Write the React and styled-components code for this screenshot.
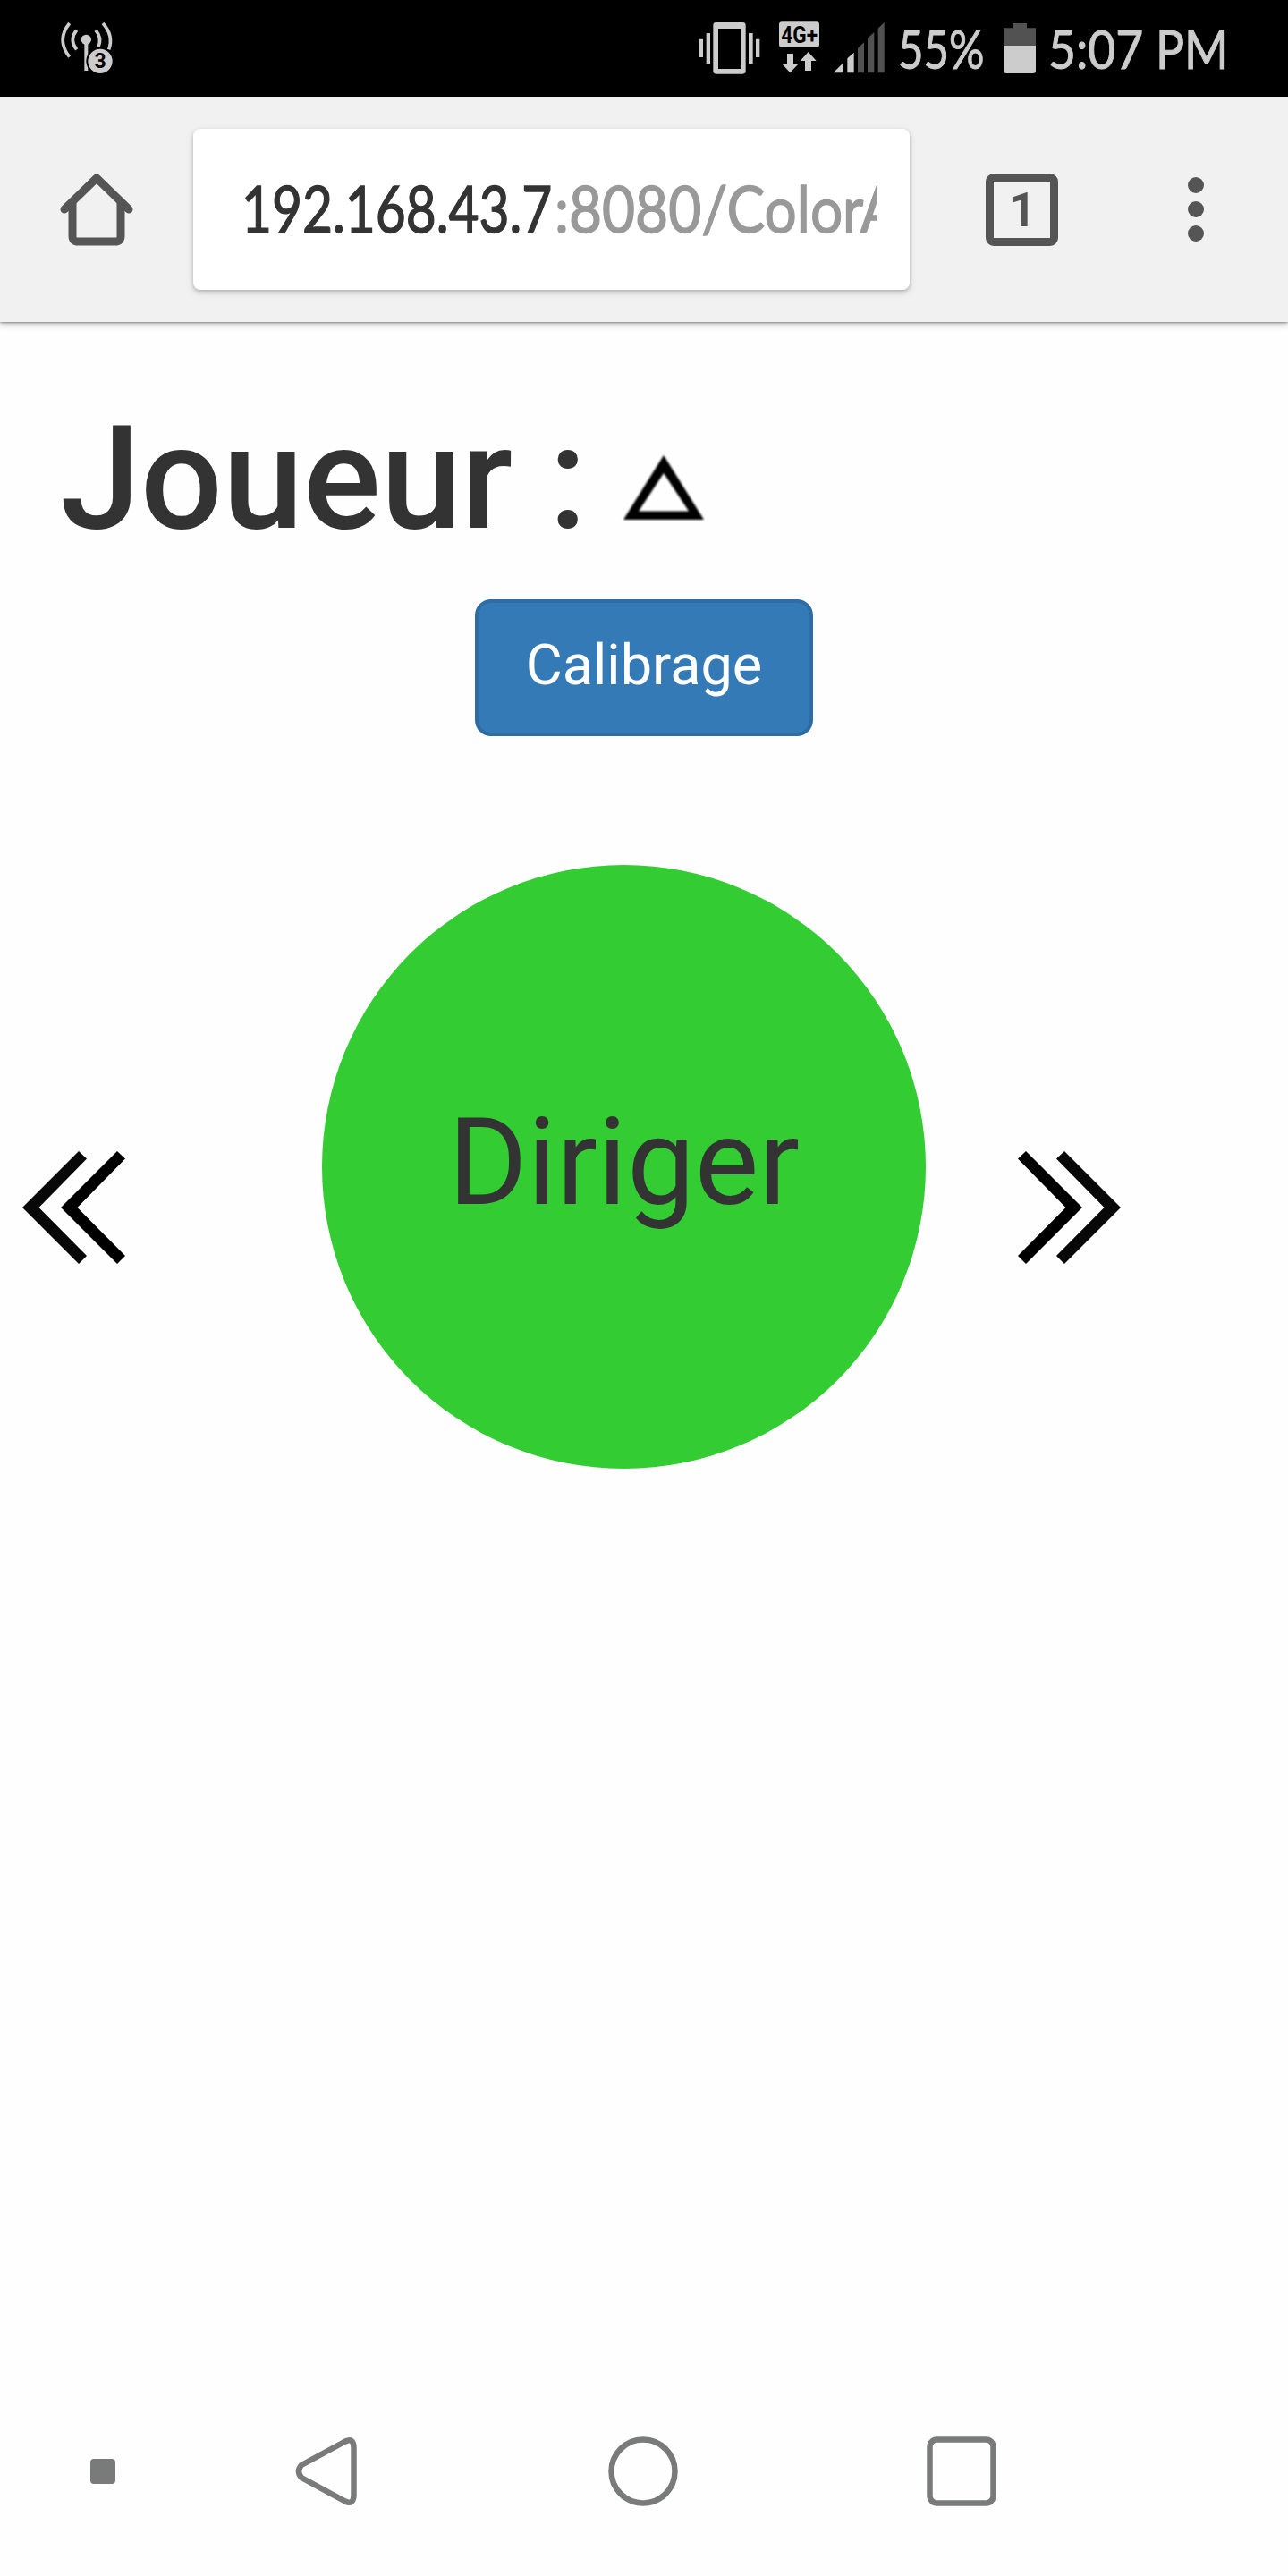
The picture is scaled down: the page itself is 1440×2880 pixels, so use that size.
import React from "react";
import styled, { createGlobalStyle } from "styled-components";

const GlobalStyle = createGlobalStyle`
  * { box-sizing: border-box; }
  body { margin: 0; background: #fefefe; }
  svg { display: block; flex: none; overflow: visible; }
`;

const Screen = styled.div`
  width: 1440px;
  height: 2880px;
  display: flex;
  flex-direction: column;
  overflow: hidden;
  background: #fefefe;
  color: #333;
  font-family: Roboto, "Liberation Sans", sans-serif;
`;

const StatusBar = styled.header`
  height: 108px;
  flex: none;
  display: flex;
  align-items: flex-start;
  padding: 23px 69px 0 66px;
  background: #000;
  color: #ccc;
`;

const StatusItems = styled.div`
  display: flex;
  align-items: flex-start;
  margin-left: auto;
`;

const StatusIcon = styled.svg`
  margin-left: ${(p) => p.$gap || 0}px;
  margin-top: ${(p) => p.$drop || 0}px;
`;

const StatusText = styled.span`
  width: ${(p) => p.$width}px;
  margin-left: ${(p) => p.$gap}px;
  height: 64px;
  line-height: 62px;
  font-family: Lato, sans-serif;
  font-size: 60px;
  white-space: nowrap;
  -webkit-text-stroke: 1px currentColor;
`;

const Narrow = styled.span`
  display: inline-block;
  transform: scaleX(${(p) => p.$scale});
  transform-origin: left center;
`;

const Toolbar = styled.nav`
  height: 252px;
  flex: none;
  display: flex;
  align-items: center;
  padding-left: 67px;
  background: #f1f1f1;
  box-shadow: 0 1px 2px rgba(0, 0, 0, 0.35), 0 3px 7px rgba(0, 0, 0, 0.22);
`;

const AddressBox = styled.div`
  width: 801px;
  height: 180px;
  margin: 0 85px 0 67px;
  padding: 0 36px 0 54px;
  display: flex;
  align-items: center;
  border-radius: 8px;
  background: #fff;
  box-shadow: 0 2px 4px rgba(0, 0, 0, 0.18), 0 3px 8px rgba(0, 0, 0, 0.13);
`;

const Address = styled.div`
  width: 711px;
  height: 90px;
  display: flex;
  overflow: hidden;
  line-height: 88px;
  font-family: Lato, sans-serif;
  font-size: 71px;
  white-space: nowrap;
  -webkit-text-stroke: 1.4px currentColor;
`;

const AddressPart = styled.span`
  width: ${(p) => p.$width}px;
  flex: none;
  color: ${(p) => p.$color};
`;

const TabCount = styled.div`
  width: 81px;
  height: 81px;
  display: flex;
  align-items: center;
  justify-content: center;
  padding-left: 1px;
  border: 9px solid #555;
  border-radius: 9px;
  color: #555;
  font-size: 54px;
  font-weight: 700;
  line-height: 63px;
`;

const MenuDots = styled.div`
  display: flex;
  flex-direction: column;
  gap: 9px;
  margin-left: 145px;
`;

const Dot = styled.i`
  width: 18px;
  height: 18px;
  border-radius: 50%;
  background: #555;
`;

const Content = styled.main`
  flex: 1;
  display: flex;
  flex-direction: column;
  align-items: center;
`;

const Title = styled.h1`
  align-self: stretch;
  height: 182px;
  margin: 86px 0 0;
  padding-left: 67px;
  display: flex;
  font-size: 162px;
  line-height: 178px;
  font-weight: 500;
`;

const TitleText = styled.span`
  width: 629px;
  white-space: nowrap;
`;

const Shape = styled.svg`
  margin-top: 61px;
  filter: blur(1px);
`;

const CalibrateButton = styled.button`
  width: 378px;
  height: 153px;
  margin: 42px 0 0;
  padding: 0 0 6px;
  border: 4px solid #2e6da4;
  border-radius: 18px;
  background: #337ab7;
  color: #fff;
  font: 400 63px/90px Roboto, sans-serif;
`;

const Controls = styled.section`
  align-self: stretch;
  display: flex;
  align-items: center;
  margin-top: 144px;
  padding-left: 24px;
`;

const Arrow = styled.svg`
  margin-top: 91px;
`;

const SteerButton = styled.button`
  width: 675px;
  height: 675px;
  margin: 0 102px 0 219px;
  padding: 0 0 8px;
  border: 0;
  border-radius: 50%;
  background: #33cc33;
  color: #333;
  font: 400 135px/193px Roboto, sans-serif;
`;

const SystemNav = styled.footer`
  height: 234px;
  flex: none;
  display: flex;
  align-items: center;
  padding-left: 101px;
`;

const NavIcon = styled.svg`
  margin-left: ${(p) => p.$gap || 0}px;
  fill: none;
  stroke: #797b7a;
  stroke-width: 6.5;
  stroke-linejoin: round;
`;

const NavDot = styled.i`
  width: 28px;
  height: 28px;
  border-radius: 4px;
  background: #797b7a;
`;

function Hotspot() {
  return (
    <StatusIcon width="61" height="60" viewBox="78 69 183 180" fill="none" stroke="#ccc" strokeWidth="11">
      <path d="M113 78Q68 134 113 191M137 101Q111 134 137 166M201 101Q224 127 209 160M225 78Q262 119 245 166" />
      <circle cx="169" cy="133" r="17" fill="#ccc" stroke="none" />
      <path d="M169 140V237" strokeWidth="12" />
      <circle cx="216" cy="205" r="47" fill="#000" stroke="none" />
      <circle cx="216" cy="205" r="41" fill="#ccc" stroke="none" />
      <text x="216" y="229" textAnchor="middle" fontFamily="Roboto" fontWeight="700" fontSize="69" fill="#000" stroke="none">3</text>
    </StatusIcon>
  );
}

function Vibrate() {
  return (
    <StatusIcon $drop={1} width="69" height="60" viewBox="63 72 207 180" fill="#ccc">
      <path d="M65 131H78V192H65zM89 111H102V213H89zM231 111H245V213H231zM255 131H268V192H255z" />
      <path fillRule="evenodd" d="M121 75H211Q221 75 221 85V238Q221 248 211 248H121Q112 248 112 238V85Q112 75 121 75zM129 96V231H204V96z" />
    </StatusIcon>
  );
}

function Network() {
  return (
    <StatusIcon $gap={21} $drop={1} width="45" height="58" viewBox="333 72 135 174" fill="#ccc">
      <rect x="333" y="73" width="135" height="86" rx="10" />
      <text x="340" y="144" fontFamily="Roboto" fontWeight="700" fontSize="78" textLength="122" lengthAdjust="spacingAndGlyphs" fill="#000">4G+</text>
      <path d="M360 180H381V215H397L370 244L344 215H360zM420 237V204H404L431 174L458 204H441V237z" />
    </StatusIcon>
  );
}

function Signal() {
  return (
    <StatusIcon $gap={16} $drop={2} width="57" height="57" viewBox="516 75 171 171">
      <path fill="#ccc" d="M515 244L549 210V244zM562 244V196L584 176V244z" />
      <path fill="#525252" d="M597 244V161L618 142V244zM630 244V128L652 108V244zM665 244V95L686 75V244z" />
    </StatusIcon>
  );
}

function Battery() {
  return (
    <StatusIcon $gap={15} $drop={3} width="36" height="56" viewBox="126 78 108 168">
      <path fill="#525252" d="M126 153V94H156V78H204V94H234V153z" />
      <path fill="#ccc" d="M126 153H234V237Q234 246 225 246H135Q126 246 126 237z" />
    </StatusIcon>
  );
}

export default function App() {
  return (
    <>
      <GlobalStyle />
      <Screen>
        <StatusBar>
          <Hotspot />
          <StatusItems>
            <Vibrate />
            <Network />
            <Signal />
            <StatusText $width={103} $gap={15}>
              <Narrow $scale={0.82}>55%</Narrow>
            </StatusText>
            <Battery />
            <StatusText $width={199} $gap={14}>
              <Narrow $scale={0.89}>5:07 PM</Narrow>
            </StatusText>
          </StatusItems>
        </StatusBar>

        <Toolbar>
          <svg width="82" height="82" viewBox="0 0 82 82" fill="none" stroke="#555" strokeWidth="9">
            <path d="M5 41L41 6L77 41" strokeLinecap="round" strokeLinejoin="round" />
            <path d="M14 33V71Q14 77 20 77H62Q68 77 68 71V33" />
          </svg>
          <AddressBox>
            <Address>
              <AddressPart $width={350} $color="#333">
                <Narrow $scale={0.825}>192.168.43.7</Narrow>
              </AddressPart>
              <AddressPart $width={361} $color="#999">
                <Narrow $scale={0.9}>:8080/ColorA</Narrow>
              </AddressPart>
            </Address>
          </AddressBox>
          <TabCount>1</TabCount>
          <MenuDots>
            <Dot />
            <Dot />
            <Dot />
          </MenuDots>
        </Toolbar>

        <Content>
          <Title>
            <TitleText>Joueur :</TitleText>
            <Shape width="92" height="76" viewBox="700 507 92 76">
              <path fillRule="evenodd" d="M746 509L791 581H701zM746 529L718 571.5H774z" />
            </Shape>
          </Title>
          <CalibrateButton>Calibrage</CalibrateButton>
          <Controls>
            <Arrow width="117" height="128" viewBox="24 1286 117 128">
              <path fill="#080808" d="M25 1350L88 1287L97 1295.500L43.500 1350L97 1404L88 1413z" />
              <path d="M68 1350L131 1287L140 1295.500L86.500 1350L140 1404L131 1413z" />
            </Arrow>
            <SteerButton>Diriger</SteerButton>
            <Arrow width="117" height="128" viewBox="1137 1286 117 128">
              <path d="M1210 1350L1147 1287L1138 1295.500L1191.500 1350L1138 1404L1147 1413z" />
              <path fill="#080808" d="M1253 1350L1190 1287L1181 1295.500L1234.500 1350L1181 1404L1190 1413z" />
            </Arrow>
          </Controls>
        </Content>

        <SystemNav>
          <NavDot />
          <NavIcon $gap={201} width="70" height="80" viewBox="330 2723 70 80">
            <path d="M386 2729.500L337 2756Q331 2763 337 2770L386 2796.500Q395 2801 395.500 2790V2736Q395 2725 386 2729.500z" />
          </NavIcon>
          <NavIcon $gap={279} width="80" height="80" viewBox="-40 -40 80 80">
            <circle r="35.500" />
          </NavIcon>
          <NavIcon $gap={277} width="78" height="78" viewBox="0 0 78 78">
            <rect x="3.500" y="3.500" width="71" height="71" rx="8" />
          </NavIcon>
        </SystemNav>
      </Screen>
    </>
  );
}
